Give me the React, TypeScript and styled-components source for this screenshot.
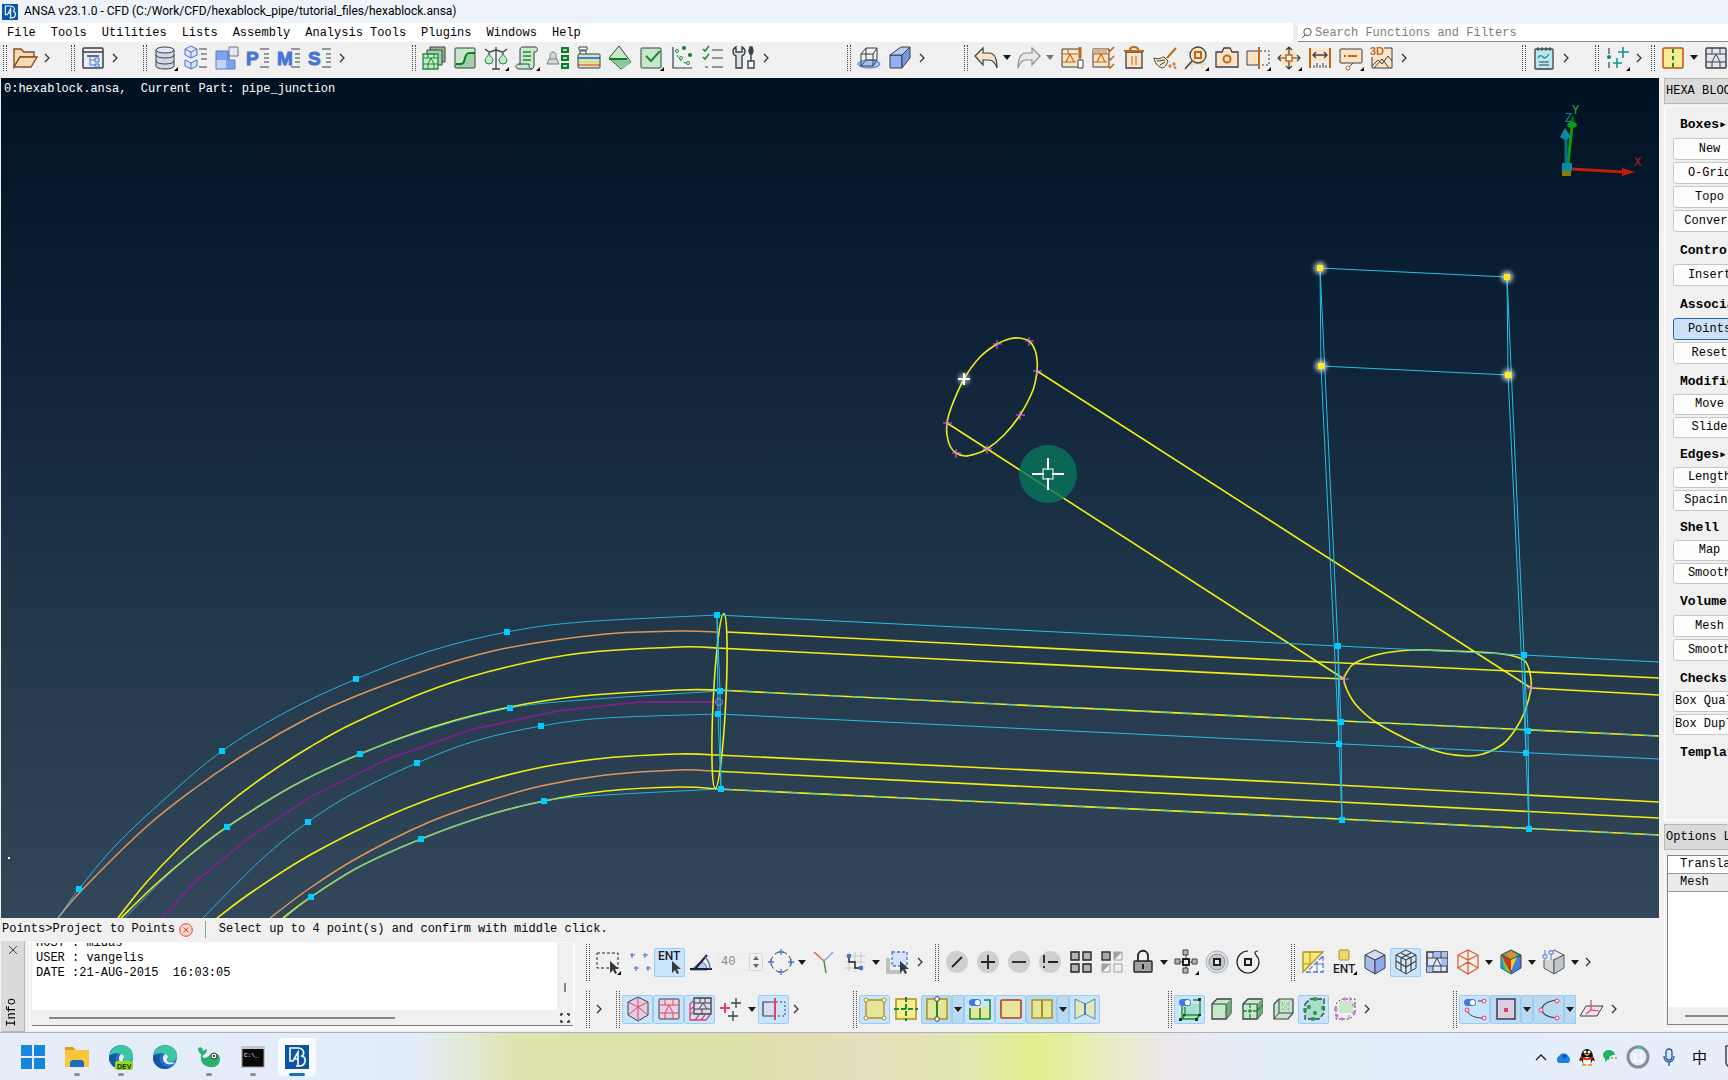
import type { ReactNode } from "react";
import styled, { createGlobalStyle } from "styled-components";

const GlobalStyle = createGlobalStyle`
    * {
        box-sizing: border-box;
    }
    body {
        margin: 0;
        overflow: hidden;
        background: #f0f0f0;
        color: #000;
        font-family: "Liberation Mono", "Noto Sans CJK SC", monospace;
        font-size: 12px;
        line-height: 15px;
    }
    button, input {
        font: inherit;
        color: inherit;
    }
    button {
        padding: 0;
        border: 0;
        background: none;
    }
`

/* ---------- icons ---------- */

const ink = "#3b4046"
const green = "#1c8a34"
const mint = "#c8e8cb"
const orange = "#c0681a"
const cream = "#fbe3c4"
const blue = "#4a74d8"
const pink = "#e0406c"
const gold = "#a8921a"
const lemon = "#e6e69a"

const lineRows = <path d="M15 3h8M17 8h6M17 13h6M15 21h8" stroke={ink} />
const letterIcon = (letter: string) => (
    <>
        <text x="0" y="19" fontFamily="Liberation Sans" fontWeight="700" fontSize="19" fill={blue} stroke={blue}>{letter}</text>
        <path d="M14 3h9M18 8h5M18 12h5M18 16h5M14 21h9" stroke={ink} />
    </>
)
const meshLines = (color: string) => (
    <path d="M2 8h20M2 16h20M8 2v6M16 2v6M8 16l4-8 4 8M8 16v6M16 16v6" stroke={color} />
)
const cubeFaces = (top: string, left: string, right: string, stroke: string) => (
    <>
        <path d="M12 0l10 5-10 5L2 5z" fill={top} stroke={stroke} />
        <path d="M2 5l10 5v14L2 18z" fill={left} stroke={stroke} />
        <path d="M22 5l-10 5v14l10-6z" fill={right} stroke={stroke} />
    </>
)
const greenBox = (
    <>
        <path d="M3 7l5-5h14v14l-5 6H3z" fill={mint} stroke={ink} strokeWidth="1.3" />
        <path d="M17 7l5-5v14l-5 6z" fill="#6fae78" />
        <path d="M3 7h14v15" stroke={ink} />
    </>
)
const disc = <circle cx="12" cy="12" r="11" fill="#cfcfcf" />
const toggle = (
    <>
        <rect x="1" y="2" width="12" height="7" rx="3.5" fill="#3f78e8" />
        <circle cx="9.500" cy="5.500" r="2.600" fill="#fff" />
    </>
)
const cursor = <path d="M14 11v12l3-3 2 4 2-1-2-4h4z" fill="#333b42" />

const icons: Record<string, ReactNode> = {
    open: (
        <g fill="#fbd8b0" stroke="#7b5128" strokeWidth="1.400">
            <path d="M1 21V3h7l3 3h10v5H7z" />
            <path d="M1 21l6-10h17l-6 10z" />
        </g>
    ),
    tree: (
        <>
            <rect x="2" y="2" width="20" height="20" rx="1" fill="#e9edf5" stroke={ink} strokeWidth="1.500" />
            <path d="M2 6h20M6 10h12" stroke={ink} strokeWidth="1.300" />
            <path d="M9 10v9h5M9 14h5" stroke={blue} />
            <path d="M14 12h4v4h-4zM14 18h4v3h-4z" fill="#cfdcf8" stroke={blue} />
        </>
    ),
    database: (
        <g fill="#cfd8ea" stroke={ink}>
            <path d="M3 4v16c0 4 18 4 18 0V4" />
            <ellipse cx="12" cy="4" rx="9" ry="3" fill="#e3e9f4" />
            <path d="M3 9c0 4 18 4 18 0M3 15c0 4 18 4 18 0" fill="none" />
        </g>
    ),
    parts: (
        <>
            <g fill="#d9e4fb" stroke={blue}>
                <path d="M7 0l6 3v6l-6 3-6-3V3zM1 3l6 3 6-3M7 6v6" />
                <path d="M1 14l6 3 6-3v6l-6 3-6-3zM7 17v6" />
            </g>
            {lineRows}
        </>
    ),
    blocks: (
        <>
            <path d="M1 5h10v9H1z" fill="#7ea4f0" />
            <path d="M1 14h10v9H1z" fill="#c3d4f8" />
            <path d="M11 5h4v9h5v9h-9z" fill="#7ea4f0" />
            <path d="M1 5h12v9h7v9H1z" stroke="#5a7cc0" />
            <path d="M14 1h9v9h-9z" fill="#e3e8f2" stroke="#6c7484" />
        </>
    ),
    p: letterIcon("P"),
    m: letterIcon("M"),
    s: letterIcon("S"),
    meshes: (
        <>
            <path d="M8 1h15v15H8z" fill="#8fb596" stroke={ink} />
            <path d="M5 4h15v15H5z" fill="#a9cfae" stroke={ink} />
            <path d="M1 8h15v15H1z" fill={mint} stroke={green} strokeWidth="1.300" />
            <path d="M1 12h15M1 18h15M6 18l3-6 3 6M6 8v4M12 8v4M6 18v5M12 18v5" stroke={green} />
        </>
    ),
    curve: (
        <>
            <rect x="2" y="2" width="20" height="20" rx="1" fill={mint} />
            <path d="M2 18h7l5-11h8v15H2z" fill="#a4cfa8" />
            <path d="M3 18h4c4 0 4-2 5-6s2-5 5-5h5" stroke="#0e7d26" strokeWidth="2" />
            <rect x="2" y="2" width="20" height="20" rx="1" stroke={ink} />
        </>
    ),
    balance: (
        <>
            <path d="M12 1v22M8 23h8M1 3l4 3c3 0 5-2 7-2s4 2 7 2l4-3" stroke={ink} strokeWidth="1.300" />
            <path d="M5 7c-1 4-4 5-4 7a4 4 0 0 0 8 0c0-2-3-3-4-7zM19 7c-1 4-4 5-4 7a4 4 0 0 0 8 0c0-2-3-3-4-7z" fill={mint} stroke={green} />
        </>
    ),
    scroll: (
        <>
            <path d="M5 19V4c0-2 1-3 3-3h12c3 0 3 4 1 5h-2v13c0 3-1 4-3 4H4c-4 0-4-5 0-5h10c0 4 1 5 3 5" fill={mint} stroke={ink} />
            <path d="M8 6h8M8 10h8M8 14h8" stroke={green} strokeWidth="1.300" />
        </>
    ),
    assign: (
        <>
            <path d="M1 18l2-5h8l2 5zM4 13V9c0-4 6-4 6 0v4" fill="#d2d8d4" stroke="#7c8580" />
            <path d="M16 2h6v4h-6zM16 10h6v4h-6zM16 18h6v4h-6z" fill="#a9d9b0" stroke="#0f7d28" strokeWidth="2" />
        </>
    ),
    layers: (
        <>
            <path d="M3 5h6v4H3zM2 1h8v3H2z" fill="#fff" stroke={ink} />
            <rect x="1" y="8" width="22" height="14" rx="1" fill={mint} />
            <path d="M1 12h22" stroke="#3f7fd0" strokeWidth="2" />
            <path d="M1 16h22" stroke="#f6d860" strokeWidth="2" />
            <path d="M1 19h22" stroke="#e58a5a" strokeWidth="2" />
            <rect x="1" y="8" width="22" height="14" rx="1" stroke={ink} />
        </>
    ),
    diamond: (
        <>
            <path d="M11 0L1 12l12 11 10-7z" fill={mint} stroke={ink} />
            <path d="M1 12h18l4 4-8 7z" fill="#8cc79a" />
            <path d="M1 13h18" stroke="#0e7d26" strokeWidth="2" />
        </>
    ),
    check: (
        <>
            <rect x="2" y="2" width="20" height="20" rx="1" fill={mint} stroke={ink} />
            <path d="M7 10l5 5 9-10" stroke={green} strokeWidth="2" />
        </>
    ),
    plot: (
        <>
            <path d="M3 1v21h19" stroke={ink} strokeWidth="1.200" />
            <path d="M6 4c1 8 4 12 13 14" stroke={green} strokeDasharray="3 2" />
            <g fill="#fff" stroke={green}>
                <circle cx="7" cy="5" r="1.500" /><circle cx="11" cy="12" r="1.500" /><circle cx="18" cy="17" r="1.500" />
            </g>
            <g fill="#0e7d26"><circle cx="14" cy="2" r="2" /><circle cx="20" cy="9" r="2" /></g>
        </>
    ),
    checklist: (
        <>
            <path d="M11 4h11M11 12h11M4 21h3M11 21h11" stroke={ink} strokeWidth="1.200" />
            <path d="M2 3l2 2 4-5M2 11l2 2 4-5" stroke={green} strokeWidth="1.600" />
        </>
    ),
    tools: (
        <g stroke={ink} strokeWidth="1.400">
            <path d="M4 1c-4 2-4 7 0 9v12h6V10c4-2 4-7 0-9v5H4z" fill="#dfe3e8" />
            <path d="M19 8v7M18 1h2l1 4-1 3h-2l-1-3z" fill={ink} />
            <path d="M16 15h6v7h-6z" fill="#fff" />
        </g>
    ),
    shadowBox: (
        <>
            <ellipse cx="12" cy="18" rx="11" ry="4" fill="#a9c2f2" stroke={blue} />
            <path d="M4 8h12v12H4zM4 8l5-6h11l-4 6M20 2v12l-4 6M9 2v12h11M9 14l-5 6" stroke={ink} />
        </>
    ),
    solidBox: (
        <>
            <path d="M2 9h12v13H2z" fill="#8fb0f2" stroke={ink} />
            <path d="M2 9l11-8h9l-8 8z" fill="#b6ccf8" stroke={ink} />
            <path d="M14 9l8-8v11l-8 10z" fill="#7797dc" stroke={ink} />
        </>
    ),
    undo: <path d="M1 10l8-8v5h6c5 0 8 5 8 15-2-6-5-8-8-8H9v5z" fill={cream} stroke={ink} strokeWidth="1.200" />,
    redo: <path d="M23 10l-8-8v5H9c-5 0-8 5-8 15 2-6 5-8 8-8h6v5z" fill="#e8e8e8" stroke="#8b8f94" strokeWidth="1.200" />,
    meshEdit: (
        <>
            <path d="M2 3h18v18H2z" fill={cream} stroke={ink} />
            <path d="M2 8h16M2 16h14M8 3v5M6 16l4-8 4 8" stroke={orange} strokeWidth="1.200" />
            <path d="M20 1v11" stroke={orange} strokeWidth="3" />
            <path d="M18 14h5v8h-5z" fill="#fff" stroke={ink} />
        </>
    ),
    meshCheck: (
        <>
            <path d="M2 3h16v18H2z" fill={cream} stroke={ink} />
            <path d="M2 3h14v5H2z" fill="#d9b48a" />
            <path d="M2 8h16M2 16h14M6 16l4-8 4 8" stroke={orange} strokeWidth="1.200" />
            <path d="M17 3l2 2 4-4M17 12l2 2 4-4M17 20l2 2 4-4" stroke={orange} strokeWidth="1.600" />
        </>
    ),
    trash: (
        <>
            <path d="M4 6h16v16H4z" fill={cream} stroke={ink} strokeWidth="1.300" />
            <path d="M2 5h20M8 4c0-4 8-4 8 0" stroke={orange} strokeWidth="2" />
            <path d="M10 10v9M14 10v9" stroke={orange} />
        </>
    ),
    broom: (
        <>
            <path d="M23 2l-9 10" stroke={orange} strokeWidth="2" />
            <path d="M1 12c5 2 8-1 10-1l4 4c-1 4-4 7-6 7-5-2-7-5-8-10z" fill={cream} stroke={ink} />
            <path d="M4 15c4 0 6-1 8-1M7 19l5-3" stroke={ink} />
            <path d="M16 19h2v2h-2zM20 17h2v2h-2zM21 21h2v1h-2z" stroke={orange} />
        </>
    ),
    zoom: (
        <>
            <path d="M1 6h22M1 18h22M8 1v22M18 1v22" stroke="#f3cf9c" />
            <circle cx="14" cy="9" r="8" fill={cream} stroke={ink} strokeWidth="1.300" />
            <path d="M11 6h6v6h-6z" stroke={orange} strokeWidth="2" />
            <path d="M8 15l-7 8" stroke={ink} strokeWidth="1.500" />
        </>
    ),
    camera: (
        <>
            <path d="M1 6h6l2-4h6l2 4h6v15H1z" fill={cream} stroke={ink} strokeWidth="1.300" />
            <circle cx="12" cy="13" r="3.500" stroke={orange} strokeWidth="2" />
        </>
    ),
    section: (
        <>
            <path d="M1 5h12v14H1z" fill={cream} stroke={ink} />
            <path d="M14 5h9v14h-9" stroke={ink} strokeDasharray="2 2" />
            <path d="M13 1v22" stroke={orange} strokeWidth="2" />
        </>
    ),
    move: (
        <>
            <circle cx="12" cy="12" r="9" fill={cream} />
            <path d="M12 1v8M12 15v8M1 12h8M15 12h8M9 4l3-3 3 3M9 20l3 3 3-3M4 9l-3 3 3 3M20 9l3 3-3 3" stroke={ink} strokeWidth="1.200" />
            <path d="M9 9h6v6H9z" fill="#fff" stroke={orange} strokeWidth="1.500" />
        </>
    ),
    measure: (
        <>
            <path d="M2 3h20v12H2z" fill={cream} />
            <path d="M2 2v20M22 2v20" stroke={orange} strokeWidth="2" />
            <path d="M5 9h14M8 6L5 9l3 3M16 6l3 3-3 3" stroke={ink} strokeWidth="1.300" />
            <path d="M6 22v-3M9 22v-5M12 22v-3M15 22v-5M18 22v-3" stroke={ink} />
        </>
    ),
    note: (
        <>
            <rect x="1" y="3" width="22" height="14" rx="1" fill={cream} stroke={ink} />
            <path d="M5 10h2M9 10h9" stroke={orange} strokeWidth="2" />
            <path d="M14 17l-4 4" stroke={ink} />
            <circle cx="9" cy="22" r="2" fill="#fff" stroke={orange} />
        </>
    ),
    threeD: (
        <>
            <path d="M14 2h8v20H2V11" fill={cream} stroke={ink} />
            <path d="M2 20l6-6 4 4 6-8 4 5M4 22l8-9 7 9" stroke={ink} />
            <text x="0" y="9" fontFamily="Liberation Sans" fontWeight="700" fontSize="11" fill={orange}>3D</text>
        </>
    ),
    notebook: (
        <>
            <rect x="3" y="3" width="18" height="20" rx="1" fill="#b9e8f0" stroke={ink} strokeWidth="1.300" />
            <path d="M6 1v4M10 1v4M14 1v4M18 1v4" stroke={ink} />
            <path d="M6 12c2-4 4-2 5-1s3 2 6-3" stroke="#1688a0" strokeWidth="1.300" />
            <path d="M7 16h10M7 19h10" stroke={ink} />
        </>
    ),
    addPoints: (
        <>
            <path d="M4 2v6M4 16v6" stroke="#7c868c" strokeWidth="2" />
            <circle cx="4" cy="11" r="2" fill="#14808e" />
            <path d="M18 1v11M13 6h11M12 12v10M8 17h9" stroke="#14909e" strokeWidth="1.600" />
        </>
    ),
    stitch: (
        <>
            <rect x="2" y="2" width="20" height="20" rx="1" fill="#f8eb94" stroke="#c4501c" strokeWidth="1.500" />
            <path d="M12 3v18" stroke={green} strokeWidth="2" strokeDasharray="4 3" />
        </>
    ),
    mesh: (
        <>
            <rect x="2" y="2" width="20" height="20" rx="1" fill="#e4e6ee" stroke={ink} strokeWidth="1.400" />
            {meshLines(ink)}
        </>
    ),
    boxSelect: (
        <>
            <path d="M1 3h21v15H1z" stroke="#222" strokeDasharray="3 2" />
            {cursor}
        </>
    ),
    fourPoints: <path d="M5 3v5M3 5h5M18 3v5M16 5h5M9 16v5M7 18h5M21 16v5M19 18h5" stroke={blue} strokeWidth="1.200" />,
    entity: (
        <>
            <text x="0" y="10" fontFamily="Roboto" fontWeight="500" fontSize="12" fill="#1c2127">ENT</text>
            {cursor}
        </>
    ),
    angle: (
        <>
            <path d="M10 13c5-2 8 2 8 7H2z" fill="#b9cef5" stroke={blue} />
            <path d="M1 19h22M6 19L18 5" stroke="#1e2328" strokeWidth="2" />
            <path d="M16 7c4 4 5 8 5 12" stroke={blue} strokeWidth="1.400" />
        </>
    ),
    circleSelect: (
        <>
            <circle cx="12" cy="12" r="10" stroke={ink} strokeDasharray="5 3" />
            <path d="M12-1v6M9 2h6M12 19v6M9 22h6M-1 12h6M2 9v6M19 12h6M22 9v6" stroke={blue} strokeWidth="1.300" />
        </>
    ),
    branch: (
        <>
            <path d="M12 11L2 2" stroke="#e0623c" strokeWidth="1.500" />
            <path d="M12 11l9-9" stroke="#7fa4ec" strokeWidth="1.500" />
            <path d="M12 11l2 12" stroke="#2a9a46" strokeWidth="1.500" />
        </>
    ),
    gridPath: (
        <>
            <path d="M2 6h20M2 12h20M2 18h20M6 2v20M12 2v20M18 2v20" stroke="#c4c8cc" />
            <path d="M6 6v6h6v6h6" stroke="#1e2328" strokeWidth="1.400" />
            <path d="M4 4h4v4H4zM16 16h4v4h-4z" fill={blue} />
        </>
    ),
    regionSelect: (
        <>
            <path d="M2 8v14h14" stroke="#c0c0c0" strokeWidth="4" />
            <path d="M6 2h15v14H6z" fill="#d4e2fb" stroke={blue} strokeWidth="1.300" strokeDasharray="3 2" />
            {cursor}
        </>
    ),
    slash: <>{disc}<path d="M7 17L17 7" stroke="#222" strokeWidth="1.800" /></>,
    plus: <>{disc}<path d="M5 12h14M12 5v14" stroke="#222" strokeWidth="1.800" /></>,
    minus: <>{disc}<path d="M5 12h14" stroke="#222" strokeWidth="1.800" /></>,
    invert: <>{disc}<path d="M6 5v8M6 16v2M10 12h10" stroke="#222" strokeWidth="1.800" /></>,
    tiles: <path d="M2 2h8v8H2zM14 2h8v8h-8zM2 14h8v8H2zM14 14h8v8h-8z" fill="#b4b4b4" stroke="#222" strokeWidth="1.400" />,
    tilesHalf: (
        <>
            <path d="M14 10V2h8zM2 22v-8h8z" fill="#a0a0a0" />
            <path d="M14 2h8v8h-8zM2 14h8v8H2zM14 14h8v8h-8z" stroke="#a0a0a0" />
            <path d="M2 2h8v8H2z" fill="#a8a8a8" stroke="#333" strokeWidth="1.400" />
        </>
    ),
    lock: (
        <>
            <path d="M7 11V6c0-7 10-7 10 0v5" stroke="#222" strokeWidth="1.800" />
            <rect x="3" y="11" width="18" height="11" rx="1" fill="#a2a2a2" stroke="#222" strokeWidth="1.400" />
            <path d="M12 14v5" stroke="#222" strokeWidth="2" />
        </>
    ),
    spread: (
        <>
            <path d="M9 0h5v5H9zM9 18h5v5H9zM1 9h5v5H1zM18 9h5v5h-5z" fill="#b4b4b4" stroke={ink} />
            <path d="M6 12h12M12 5v13" stroke={ink} />
            <path d="M9 9h6v6H9z" fill="#eee" stroke="#222" strokeWidth="2" />
        </>
    ),
    ring: (
        <>
            <circle cx="12" cy="12" r="11" fill="#dde2e8" stroke="#a8b0b8" />
            <circle cx="12" cy="12" r="8" fill="#c3c9cf" stroke="#8b939a" />
            <path d="M9 9h6v6H9z" fill="#eee" stroke="#222" strokeWidth="2" />
        </>
    ),
    orbit: (
        <>
            <path d="M22 1c-3 0-4 2-2 4s3 4 3 7A11 11 0 1 1 12 1" stroke="#222" strokeWidth="1.200" />
            <path d="M9 9h6v6H9z" fill="#eee" stroke="#222" strokeWidth="2" />
        </>
    ),
    plan: (
        <>
            <path d="M22 6v16H6z" fill="#fff" stroke={blue} strokeWidth="1.300" strokeDasharray="5 2" />
            <path d="M15 14h7M16 12v10" stroke={blue} />
            <path d="M2 2h20L2 22z" fill="#f8e878" stroke={gold} strokeWidth="1.300" />
            <path d="M9 2v12M2 14h8" stroke={gold} />
        </>
    ),
    entityBox: (
        <>
            <rect x="7" y="0" width="10" height="10" rx="1" fill="#ecd96a" stroke={gold} />
            <text x="1" y="23" fontFamily="Roboto" fontWeight="500" fontSize="12" fill="#1c2127">ENT</text>
        </>
    ),
    cube: cubeFaces("#d5dcf2", "#a9bdea", "#8fa9e6", ink),
    cubeGrid: (
        <>
            {cubeFaces("#d3e9fa", "#d3e9fa", "#d3e9fa", ink)}
            <path d="M7 3l10 5v13M17 3L7 8v13M2 11l10 6 10-6" stroke={ink} strokeWidth="1.200" />
        </>
    ),
    meshBlue: (
        <>
            <rect x="2" y="2" width="20" height="20" fill="#dfe8fa" stroke={ink} strokeWidth="1.600" />
            <path d="M9 2h13v6H9zM2 16h6v6H2zM16 9h6v7h-6z" fill="#a4bff4" />
            {meshLines(ink)}
        </>
    ),
    cubeRed: (
        <g stroke="#e0582c" strokeWidth="1.200">
            <path d="M12 0l10 5v13l-10 6-10-6V5zM2 5l10 5 10-5M12 10v14M2 18l10-6 10 6M12 0v12" />
        </g>
    ),
    cubeRainbow: (
        <>
            {cubeFaces("#3fae6c", "#f0b428", "#3f7fe0", ink)}
            <path d="M2 5l10 5v14z" fill="#d9301c" />
            <path d="M2 5v13l10 6z" fill="#1c9ad0" />
            <path d="M2 5l4 14 6 5z" fill="#7ecb2c" />
            <path d="M12 10l6-3-6 14z" fill="#f0d428" />
            <path d="M6 4l6-3 5 4-5 4z" fill="#f08a28" />
        </>
    ),
    cubeFilter: (
        <>
            {cubeFaces("#e6e6e6", "#d0d4d6", "#c2c6c8", "#555b60")}
            <path d="M0 0h11v10H0z" fill="#f0f0f0" />
            <path d="M3 0v10M9 0v10" stroke={blue} />
            <path d="M1 5h4v3H1zM7 1h4v3H7z" fill="#fff" stroke={blue} />
        </>
    ),
    hexPink: (
        <>
            <path d="M12 0l10 5v13l-10 6-10-6V5z" fill="#e0cfe0" stroke={ink} />
            <path d="M2 5l10 5 10-5M12 10v14M2 18l10-8M22 18l-10-8M12 0v10" stroke={pink} />
        </>
    ),
    meshPink: (
        <>
            <rect x="2" y="2" width="20" height="20" rx="1" fill="#e4d4e4" stroke={ink} />
            {meshLines(pink)}
        </>
    ),
    boxPink: (
        <>
            <path d="M6 1h17v16H6z" fill="#dcd9e8" stroke={ink} strokeWidth="1.300" />
            <path d="M6 6h17M6 12h17M12 1v5M17 1v5M11 12l4-6 4 6M14 12v5" stroke={ink} />
            <path d="M6 3L2 7v16h16l4-5M2 13l4-4M2 18l4-4M7 23l4-5M13 23l4-5" stroke={pink} strokeWidth="1.300" />
        </>
    ),
    plusPink: (
        <>
            <path d="M6 6v10M1 11h10" stroke={pink} strokeWidth="2" />
            <path d="M17 1v10M12 6h10M14 14v10M9 19h10" stroke={ink} strokeWidth="1.300" />
        </>
    ),
    sectionPink: (
        <>
            <path d="M1 5h12v14H1z" fill="#d9dcf0" stroke={ink} strokeWidth="1.200" />
            <path d="M14 5h9v14h-9" stroke={ink} strokeDasharray="2 2" />
            <path d="M13 1v22" stroke={pink} strokeWidth="2" />
        </>
    ),
    quadNodes: (
        <>
            <path d="M3 3h18v18H3z" fill={lemon} stroke={gold} strokeWidth="1.300" />
            <g fill="#fff" stroke={gold}>
                <circle cx="3" cy="3" r="2" /><circle cx="21" cy="3" r="2" /><circle cx="3" cy="21" r="2" /><circle cx="21" cy="21" r="2" />
            </g>
        </>
    ),
    quadCross: (
        <>
            <rect x="2" y="2" width="20" height="20" fill="#f6ee8e" stroke={gold} strokeWidth="1.500" />
            <path d="M12 0v24M0 12h24" stroke={green} strokeWidth="2" strokeDasharray="5 2" />
        </>
    ),
    quadSplit: (
        <>
            <rect x="2" y="2" width="20" height="20" fill={lemon} stroke={gold} strokeWidth="1.500" />
            <path d="M12 4v17" stroke={green} strokeWidth="2" />
            <g fill="#fff" stroke={ink}><circle cx="12" cy="2" r="2.300" /><circle cx="12" cy="22" r="2.300" /></g>
        </>
    ),
    quadToggle: (
        <>
            <path d="M2 10h20v12H2z" fill={lemon} />
            <path d="M2 11v11h20V3h-6M12 11v11" stroke={green} strokeWidth="1.600" />
            {toggle}
        </>
    ),
    quadRed: <rect x="2" y="3" width="20" height="18" rx="1" fill={lemon} stroke="#b83a1c" strokeWidth="1.600" />,
    quadPair: (
        <>
            <rect x="2" y="3" width="20" height="18" fill={lemon} stroke={gold} strokeWidth="1.500" />
            <path d="M12 3v18" stroke={gold} strokeWidth="2" />
        </>
    ),
    book: (
        <>
            <path d="M2 2l10 5 10-5v20l-10-5-10 5z" fill="#e2e8b8" stroke="#5a88b8" />
            <path d="M12 6v12" stroke={blue} strokeWidth="2" />
        </>
    ),
    greenToggle: (
        <>
            <path d="M4 10l3-3h15v14l-3 2H3z" fill="#a9dfd0" />
            <path d="M4 9v13h14l4-4V3h-7M4 22l3-4h15M7 10v8" stroke={green} strokeWidth="1.300" />
            <path d="M1 21h3v3H1zM17 21h3v3h-3zM20 1h3v3h-3zM5 17h2v2H5zM20 17h3v2h-3z" fill="#1d3a28" />
            {toggle}
        </>
    ),
    greenBox,
    greenCross: <>{greenBox}<path d="M10 7v15M3 14h14l5-6" stroke={green} strokeWidth="1.300" strokeDasharray="4 1" /></>,
    greenInner: (
        <>
            <path d="M3 7l5-5h14v14l-5 6H3z" fill={mint} stroke={ink} strokeWidth="1.200" />
            <path d="M8 2v14h14M8 16l-5 6" stroke={ink} />
            <path d="M11 6h7v7h-7zM8 3l10 10M21 3L11 13" stroke="#7ba883" strokeDasharray="1 1" />
        </>
    ),
    greenNodes: (
        <>
            <path d="M3 7l5-5h14v14l-5 6H3z" fill="#a9dfd0" stroke={ink} strokeWidth="1.300" strokeDasharray="5 2" />
            <path d="M12 1h2v2h-2zM2 12h2v2H2zM20 10h2v2h-2zM10 21h2v2h-2zM12 15h2v2h-2zM6 9h2v2H6z" fill="#fff" stroke={green} strokeWidth="1.300" />
        </>
    ),
    greenPlus: (
        <>
            <rect x="6" y="4" width="14" height="12" rx="1" fill={mint} />
            <path d="M3 7l5-5h14v14l-5 6H3z" stroke={ink} strokeDasharray="2 2" />
            <path d="M12 0v4M17 0v4M21 6v4M21 14v4M2 10v4M4 17v4M9 20v4M16 18v4M1 12h4M10 2h5M19 8h4M19 16h4M2 19h4M7 22h4" stroke="#d45ad8" />
        </>
    ),
    arcToggle: (
        <>
            <path d="M4 12c0 5 6 9 16 9M15 4h5" stroke={ink} />
            <g fill="#fbe4ec" stroke={pink}>
                <circle cx="4" cy="13" r="2" /><circle cx="21" cy="21" r="2" /><circle cx="21" cy="4" r="2" />
            </g>
            {toggle}
        </>
    ),
    face: (
        <>
            <rect x="3" y="2" width="18" height="20" fill="#d9cfe4" stroke={ink} strokeWidth="1.500" />
            <path d="M10 11h4v4h-4z" fill={pink} />
        </>
    ),
    arc: (
        <>
            <path d="M20 3C0 5 0 20 20 21" stroke={ink} strokeWidth="1.200" />
            <g fill="#fbe4ec" stroke={pink}>
                <circle cx="4" cy="13" r="2" /><circle cx="20" cy="21" r="2" /><circle cx="20" cy="4" r="2" />
            </g>
        </>
    ),
    plane: (
        <>
            <path d="M6 9h17l-6 10H0z" fill="#f6e4e8" stroke={ink} />
            <path d="M11 3v10l8 1M11 13l-5 4" stroke={pink} strokeWidth="1.200" />
        </>
    ),
}

const IconSvg = styled.svg`
    display: block;
    flex: none;
    overflow: visible;
`

interface IconProps {
    name: string
    corner?: boolean
}

const Icon = function ({ name, corner }: IconProps) {
    return (
        <IconSvg width="28" height="28" viewBox="-2 -2 28 28" fill="none" aria-hidden="true">
            {icons[name]}
            {corner && <path d="M25 21v4h-4z" fill="#000" />}
        </IconSvg>
    )
}

/* ---------- tool bars ---------- */

interface Tool {
    icon: string
    corner?: boolean
    active?: boolean
    pressed?: boolean
    caret?: boolean
    spin?: boolean
    faded?: boolean
}

const toneOf = (p: { $active?: boolean, $pressed?: boolean }) =>
    p.$pressed ? "#bcd9f2" : p.$active ? "#c9e4fb" : "transparent"
const edgeOf = (p: { $active?: boolean, $pressed?: boolean }) =>
    p.$pressed || p.$active ? "#99cdf5" : "transparent"

const Group = styled.div<{ $width?: number }>`
    display: flex;
    flex: none;
    align-items: center;
    width: ${(p) => (p.$width ? `${p.$width}px` : "auto")};
`
const Grip = styled.span<{ $tall?: boolean }>`
    width: 4px;
    height: ${(p) => (p.$tall ? 37 : 26)}px;
    flex: none;
    margin: 0 2px 0 3px;
    border: 0 dotted #444;
    border-width: 0 1px;
`
const ToolButton = styled.button<{ $active?: boolean, $pressed?: boolean }>`
    display: flex;
    align-items: center;
    justify-content: center;
    flex: none;
    width: 31px;
    height: 29px;
    border: 1px solid ${edgeOf};
    border-radius: 2px;
    background: ${toneOf};
`
const CaretButton = styled.button<{ $pressed?: boolean, $faded?: boolean }>`
    display: flex;
    align-items: center;
    justify-content: center;
    flex: none;
    width: 12px;
    height: 29px;
    border: 1px solid ${edgeOf};
    background: ${toneOf};
    color: ${(p) => (p.$faded ? "#777" : "#1c1c1c")};
`
const MoreButton = styled.button`
    display: flex;
    align-items: center;
    justify-content: center;
    flex: none;
    width: 13px;
    height: 29px;
`
const SpinBox = styled.label`
    display: flex;
    flex: none;
    width: 45px;
    height: 18px;
    margin: 0 2px;
    color: #8a8a8a;
`
const SpinInput = styled.input`
    width: 31px;
    padding: 0 0 0 2px;
    border: 1px solid #ebebeb;
    background: #f0f0f0;
    color: #8a8a8a;
`
const SpinArrows = styled.span`
    display: flex;
    flex: 1;
    align-items: center;
    justify-content: center;
    border: 1px solid #d5d5d5;
    border-radius: 2px;
`

interface ToolGroupProps {
    width?: number
    tools: Tool[]
    more?: boolean
    tall?: boolean
}

const ToolGroup = function ({ width, tools, more, tall }: ToolGroupProps) {
    return (
        <Group $width={width}>
            <Grip $tall={tall} />
            {tools.map((tool) => (
                <Group key={tool.icon}>
                    <ToolButton aria-label={tool.icon} $active={tool.active} $pressed={tool.pressed}>
                        <Icon name={tool.icon} corner={tool.corner} />
                    </ToolButton>
                    {tool.caret && (
                        <CaretButton aria-label={`${tool.icon} options`} $pressed={tool.pressed} $faded={tool.faded}>
                            <IconSvg width="8" height="5" viewBox="0 0 8 5"><path d="M0 0h8L4 5z" fill="currentColor" /></IconSvg>
                        </CaretButton>
                    )}
                    {tool.spin && (
                        <SpinBox aria-label="Feature angle">
                            <SpinInput type="text" defaultValue="40" disabled />
                            <SpinArrows>
                                <IconSvg width="6" height="12" viewBox="0 0 6 12"><path d="M0 4l3-4 3 4zM0 8l3 4 3-4z" fill="#666" /></IconSvg>
                            </SpinArrows>
                        </SpinBox>
                    )}
                </Group>
            ))}
            {more && (
                <MoreButton aria-label="More tools">
                    <IconSvg width="6" height="10" viewBox="0 0 6 10" fill="none"><path d="M1 1l4 4-4 4" stroke="#333" strokeWidth="1.300" /></IconSvg>
                </MoreButton>
            )}
        </Group>
    )
}

const topGroups: ToolGroupProps[] = [
    { width: 68, more: true, tools: [{ icon: "open" }] },
    { width: 72, more: true, tools: [{ icon: "tree" }] },
    {
        width: 269, more: true,
        tools: [{ icon: "database", corner: true }, { icon: "parts" }, { icon: "blocks" }, { icon: "p" }, { icon: "m" }, { icon: "s" }],
    },
    {
        width: 435, more: true,
        tools: [
            { icon: "meshes" }, { icon: "curve" }, { icon: "balance", corner: true }, { icon: "scroll", corner: true },
            { icon: "assign" }, { icon: "layers" }, { icon: "diamond" }, { icon: "check", corner: true },
            { icon: "plot" }, { icon: "checklist" }, { icon: "tools" },
        ],
    },
    { width: 117, more: true, tools: [{ icon: "shadowBox" }, { icon: "solidBox" }] },
    {
        width: 558, more: true,
        tools: [
            { icon: "undo", caret: true }, { icon: "redo", caret: true, faded: true }, { icon: "meshEdit" }, { icon: "meshCheck" },
            { icon: "trash" }, { icon: "broom" }, { icon: "zoom", corner: true }, { icon: "camera" },
            { icon: "section", corner: true }, { icon: "move", corner: true }, { icon: "measure" },
            { icon: "note", corner: true }, { icon: "threeD" },
        ],
    },
    { width: 73, more: true, tools: [{ icon: "notebook" }] },
    { width: 56, more: true, tools: [{ icon: "addPoints", corner: true }] },
    { tools: [{ icon: "stitch", caret: true }, { icon: "mesh" }] },
]

const selectionGroups: ToolGroupProps[] = [
    {
        width: 349, more: true,
        tools: [
            { icon: "boxSelect", corner: true }, { icon: "fourPoints" }, { icon: "entity", active: true }, { icon: "angle", spin: true },
            { icon: "circleSelect", caret: true }, { icon: "branch" }, { icon: "gridPath", caret: true }, { icon: "regionSelect" },
        ],
    },
    {
        width: 356,
        tools: [
            { icon: "slash" }, { icon: "plus" }, { icon: "minus" }, { icon: "invert" }, { icon: "tiles" }, { icon: "tilesHalf" },
            { icon: "lock", caret: true }, { icon: "spread", corner: true }, { icon: "ring" }, { icon: "orbit" },
        ],
    },
    {
        more: true,
        tools: [
            { icon: "plan" }, { icon: "entityBox", corner: true }, { icon: "cube" }, { icon: "cubeGrid", active: true },
            { icon: "meshBlue" }, { icon: "cubeRed", caret: true }, { icon: "cubeRainbow", caret: true }, { icon: "cubeFilter", caret: true },
        ],
    },
]

const visibilityGroups: ToolGroupProps[] = [
    { width: 30, more: true, tools: [] },
    {
        width: 237, more: true,
        tools: [
            { icon: "hexPink", active: true }, { icon: "meshPink", active: true }, { icon: "boxPink", active: true },
            { icon: "plusPink", caret: true }, { icon: "sectionPink", active: true },
        ],
    },
    {
        width: 315,
        tools: [
            { icon: "quadNodes", active: true }, { icon: "quadCross" }, { icon: "quadSplit", pressed: true, caret: true },
            { icon: "quadToggle", active: true }, { icon: "quadRed", active: true }, { icon: "quadPair", pressed: true, caret: true },
            { icon: "book", active: true },
        ],
    },
    {
        width: 285, more: true,
        tools: [
            { icon: "greenToggle", active: true }, { icon: "greenBox" }, { icon: "greenCross" }, { icon: "greenInner" },
            { icon: "greenNodes", active: true }, { icon: "greenPlus" },
        ],
    },
    {
        more: true,
        tools: [
            { icon: "arcToggle", active: true }, { icon: "face", pressed: true, caret: true },
            { icon: "arc", pressed: true, caret: true }, { icon: "plane" },
        ],
    },
]

/* ---------- window frame ---------- */

const Window = styled.div`
    display: flex;
    flex-direction: column;
    height: 100vh;
    overflow: hidden;
`
const TitleBar = styled.header`
    display: flex;
    align-items: center;
    gap: 6px;
    height: 23px;
    padding-left: 2px;
    background: #eef3fa;
    font-family: Roboto, "Noto Sans", sans-serif;
    font-size: 12px;
`
const MenuRow = styled.div`
    display: flex;
    height: 19px;
    gap: 5px;
`
const Menu = styled.nav`
    display: flex;
    flex: 1;
    align-items: center;
    gap: 15px;
    padding-left: 7px;
    background: #fff;
`
const MenuItem = styled.button`
    line-height: 18px;
`
const SearchBox = styled.label`
    display: flex;
    align-items: center;
    gap: 3px;
    width: 430px;
    margin-top: 1px;
    padding: 1px 0 0 4px;
    background: #fff;
    border-bottom: 1px solid #8a8a8a;
`
const SearchInput = styled.input`
    flex: 1;
    min-width: 0;
    padding: 0;
    border: 0;
    background: none;
    outline: none;
    &::placeholder {
        color: #7d7d7d;
        opacity: 1;
    }
`
const ToolBar = styled.div`
    display: flex;
    align-items: center;
    height: 36px;
    padding-bottom: 5px;
    overflow: hidden;
`
const Body = styled.div`
    display: flex;
    flex: 1;
    min-height: 0;
    gap: 5px;
`
const Main = styled.main`
    display: flex;
    flex: 1;
    flex-direction: column;
    min-width: 0;
    padding-left: 1px;
`
const Viewport = styled.section`
    position: relative;
    flex: 1;
    min-height: 0;
    overflow: hidden;
    background: linear-gradient(#001122, #0e2338 32%, #203649 62%, #33475a);
`
const ViewportLabel = styled.div`
    position: absolute;
    top: 4px;
    left: 3px;
    color: #fff;
    white-space: pre;
`
const SceneSvg = styled.svg`
    display: block;
    width: 100%;
    height: 100%;
`

/* ---------- 3D scene ---------- */

type Point = [number, number]

const parse = (text: string): Point[] =>
    text.split(" ").map((pair) => pair.split(",").map(Number) as Point)

// Catmull-Rom spline written out as cubic beziers
const smooth = (text: string, closed = false) => {
    const pts = parse(text)
    const n = pts.length
    const at = (i: number) => (closed ? pts[(i + n) % n] : pts[Math.max(0, Math.min(n - 1, i))])
    let d = `M${pts[0]}`
    for (let i = 0; i < (closed ? n : n - 1); i++) {
        const [a, b, c, e] = [at(i - 1), at(i), at(i + 1), at(i + 2)]
        d += `C${b[0] + (c[0] - a[0]) / 6},${b[1] + (c[1] - a[1]) / 6} ${c[0] - (e[0] - b[0]) / 6},${c[1] - (e[1] - b[1]) / 6} ${c}`
    }
    return d
}

const edges = [
    "58,918 79,889 116,845 167,797 222,751 286,712 356,679 430,651 507,632 582,622 717,615",
    "125,918 170,873 227,827 291,787 360,754 436,727 510,708 582,700 720,691",
    "203,918 262,859 308,822 354,793 417,763 475,741 541,726 606,718 718,714",
    "285,918 311,897 359,867 421,839 485,816 544,801 606,795 721,789",
]
const pipes = [
    "118,918 145,884 179,848 223,808 262,778 310,747 356,722 436,688 507,667 582,653 679,647 717,648",
    "121,918 155,885 190,855 227,827 291,787 360,754 436,726 510,707 582,696 679,690 717,690",
    "217,918 252,892 310,855 388,816 456,790 533,769 606,758 679,754 717,755",
    "283,918 311,897 359,867 421,839 485,816 544,801 606,791 679,787 717,789",
]
const seams = [
    "58,918 82,890 145,828 194,789 250,751 310,717 356,696 436,667 507,648 606,634 679,631 717,632",
    "270,918 310,888 359,857 427,823 485,802 541,786 606,775 679,770 712,771",
]
const nodes = parse(
    "79,889 222,751 356,679 507,632 717,615 227,827 360,754 510,708 720,691 308,822 417,763 541,726 718,714 311,897 421,839 544,801 721,789 " +
    "1338,646 1524,655 1341,722 1528,731 1339,744 1526,753 1342,820 1529,829",
)
const picked = parse("1320,268 1507,277 1321,366 1508,375")
const hotPoints = parse("997,344 1029,341 1037,371 1020,415 987,449 956,453 947,423 1344,679 1531,688")

const Scene = function () {
    return (
        <SceneSvg viewBox="1 78 1658 840" preserveAspectRatio="xMinYMin slice" fill="none" aria-label="3D view">
            <defs>
                <filter id="glow" x="-100%" y="-100%" width="300%" height="300%"><feGaussianBlur stdDeviation="2" /></filter>
            </defs>
            <polyline
                points="162,918 194,883 250,837 310,797 388,759 470,730 557,711 640,702 717,702"
                stroke="#84208f" strokeWidth="2" opacity="0.850"
            />
            <g stroke="#e0955a" strokeWidth="1.500">
                {seams.map((s) => <path key={s} d={smooth(s)} />)}
            </g>
            <g stroke="#f2ee14" strokeWidth="1.600">
                {pipes.map((s) => <path key={s} d={smooth(s)} />)}
                <path d="M727,632L1280,660L1659,678M717,648L1280,676L1344,679M1531,688L1659,695M717,690L1280,718L1659,736M717,755L1280,782L1659,802M712,771L1280,799L1659,818M717,789L1280,816L1659,835" />
                <path d="M1037,371L1531,688M947,423L1344,679" />
                <ellipse cx="719.500" cy="701" rx="6.300" ry="87.500" transform="rotate(2.800 719.500 701)" />
                <path d={smooth("947,423 951,408 964,379 980,357 997,344 1009,339 1019,338 1029,341 1035,350 1037,360 1037,371 1033,390 1020,415 1004,435 987,449 975,454 965,456 956,453 950,446 947,435", true)} />
                <path d={smooth("1344,679 1347,672 1355,663 1380,654 1413,650 1453,651 1493,653 1513,656 1525,661 1530,673 1531,688 1525,711 1515,730 1503,744 1483,754 1467,756 1443,753 1417,744 1377,723 1357,706 1347,690", true)} />
            </g>
            <g stroke="#28bfe8">
                {edges.map((s) => <path key={s} d={smooth(s)} opacity="0.900" />)}
                <path d="M717,615L1338,646L1524,655L1659,662M718,714L1280,741L1659,759" />
                <path d="M720,690L1280,718L1659,736M721,789L1280,816L1659,835" strokeDasharray="12 10" opacity="0.800" />
                <path d="M717,615L718,714L721,789M717,615L720,691L721,789" />
                <path d="M1320,268L1507,277M1321,366L1508,375" />
                <path d="M1320,268L1338,646L1341,722L1342,820M1320,268L1321,366L1339,744L1342,820M1338,646L1339,744" />
                <path d="M1507,277L1524,655L1528,731L1529,829M1507,277L1508,375L1526,753L1529,829M1524,655L1526,753" />
            </g>
            <circle cx="719" cy="702" r="3.500" stroke="#7a8cf0" />
            {nodes.map(([x, y]) => <rect key={`${x}-${y}`} x={x - 3} y={y - 3} width="6" height="6" fill="#00ccff" />)}
            {picked.map(([x, y]) => (
                <g key={`${x}-${y}`}>
                    <circle cx={x} cy={y} r="6" fill="#fff" opacity="0.700" filter="url(#glow)" />
                    <rect x={x - 3} y={y - 3} width="6" height="6" fill="#ffee10" />
                </g>
            ))}
            {hotPoints.map(([x, y]) => <path key={`${x}-${y}`} d={`M${x - 4},${y}h9M${x},${y - 4}v9`} stroke="#e070e0" />)}
            <circle cx="964" cy="379" r="6" fill="#fff" opacity="0.450" filter="url(#glow)" />
            <path d="M958,379h12M964,373v12" stroke="#fff" strokeWidth="2" />
            <circle cx="1048" cy="474" r="29" fill="#07755a" opacity="0.800" />
            <path d="M1032,474h12M1052,474h12M1048,458v12M1048,478v12" stroke="#fff" strokeWidth="2" />
            <rect x="1043" y="469" width="10" height="10" stroke="#fff" />
            <path d="M8,857h2v2h-2z" fill="#fff" />

            <path d="M1572,169L1624,172" stroke="#c01c0c" strokeWidth="3" />
            <path d="M1622,168L1635,172L1622,176z" fill="#c01c0c" />
            <path d="M1568,163L1572,126" stroke="#08a010" strokeWidth="3" />
            <path d="M1568,125L1573,115L1576,125z" fill="#056a0c" />
            <ellipse cx="1572" cy="125" rx="5" ry="3" fill="#08a010" />
            <path d="M1566,163V136" stroke="#067284" strokeWidth="3" />
            <path d="M1560,137L1565,128L1571,137L1565,140z" fill="#0a8ca0" />
            <rect x="1562" y="163" width="10" height="8" fill="#0a8ca0" />
            <rect x="1562" y="171" width="9" height="5" fill="#8a7a08" />
            <g fontFamily="Liberation Mono" fontSize="12">
                <text x="1572" y="114" fill="#18c020">Y</text>
                <text x="1565" y="122" fill="#0a8ca0">Z</text>
                <text x="1634" y="166" fill="#b01c14">X</text>
            </g>
        </SceneSvg>
    )
}

/* ---------- status and info ---------- */

const StatusBar = styled.div`
    display: flex;
    align-items: center;
    height: 23px;
    padding-left: 1px;
    white-space: pre;
`
const CancelButton = styled.button`
    display: flex;
    margin: 0 12px 0 4px;
`
const StatusHint = styled.span`
    padding-left: 13px;
    border-left: 1px solid #999;
    line-height: 17px;
`
const Dock = styled.div`
    display: flex;
    height: 91px;
    min-width: 0;
`
const InfoTab = styled.div`
    display: flex;
    flex-direction: column;
    align-items: center;
    justify-content: space-between;
    flex: none;
    width: 24px;
    padding: 5px 0 4px;
    background: #dadada;
    border-right: 1px solid #b8b8b8;
    border-bottom: 1px solid #b8b8b8;
`
const VerticalLabel = styled.span`
    writing-mode: vertical-rl;
    transform: rotate(180deg);
`
const InfoFrame = styled.div`
    display: grid;
    flex: none;
    grid-template-columns: 1fr 16px;
    grid-template-rows: 1fr 16px;
    width: 546px;
    margin: 1px 8px 2px 4px;
    padding-left: 2px;
    border: 1px solid #fafafa;
    border-width: 1px 2px 4px 1px;
`
const InfoText = styled.div`
    display: flex;
    flex-direction: column;
    justify-content: flex-end;
    min-height: 0;
    overflow: hidden;
    padding: 0 0 29px 4px;
    background: #fff;
    white-space: pre;
`
const ScrollTrack = styled.div<{ $vertical?: boolean }>`
    display: flex;
    align-items: ${(p) => (p.$vertical ? "flex-end" : "center")};
    justify-content: ${(p) => (p.$vertical ? "center" : "flex-start")};
    padding: ${(p) => (p.$vertical ? "0 0 18px" : "0 0 0 17px")};
    border-bottom: ${(p) => (p.$vertical ? "0" : "1px solid #777")};
`
const ScrollThumb = styled.span<{ $vertical?: boolean }>`
    flex: none;
    width: ${(p) => (p.$vertical ? "2px" : "346px")};
    height: ${(p) => (p.$vertical ? "9px" : "2px")};
    background: #858585;
`
const ExpandButton = styled.button`
    display: flex;
    align-items: center;
    justify-content: center;
    border-bottom: 1px solid #777;
`
const ToolRows = styled.div`
    display: grid;
    flex: 1;
    grid-template-rows: 42px 46px;
    row-gap: 3px;
    min-width: 0;
    overflow: hidden;
`
const ToolRow = styled.div`
    display: flex;
    align-items: center;
`

/* ---------- side panel ---------- */

const SidePanel = styled.aside`
    display: flex;
    flex: none;
    flex-direction: column;
    width: 64px;
    overflow: hidden;
`
const PanelTitle = styled.h2`
    flex: none;
    width: 96px;
    margin: 0;
    padding: 0 1px;
    border: 1px solid #b8b8b8;
    background: #dadada;
    font-size: 12px;
    font-weight: 400;
    line-height: 24px;
    white-space: nowrap;
`
const PanelBody = styled.div`
    flex: 1;
    width: 96px;
    min-height: 0;
    margin: 2px 0 3px;
    padding: 5px 7px 0;
    overflow: hidden;
    border: 1px solid #fafafa;
    border-width: 1px 0 2px 2px;
`
const Section = styled.section<{ $compact?: boolean }>`
    display: flex;
    flex-direction: column;
    gap: 2px;
    width: 73px;
    margin-bottom: ${(p) => (p.$compact ? 5 : 6)}px;
`
const SectionTitle = styled.h3<{ $compact?: boolean }>`
    margin: 0 0 -2px;
    padding-left: 7px;
    font-size: 13px;
    font-weight: 700;
    line-height: ${(p) => (p.$compact ? 24 : 26)}px;
    white-space: nowrap;
`
const PanelButton = styled.button<{ $compact?: boolean, $active?: boolean, $wide?: boolean }>`
    height: ${(p) => (p.$compact ? 21 : 22)}px;
    padding: 0 1px;
    border: 1px solid ${(p) => (p.$active ? "#2a66a8" : "#c8c8c8")};
    border-radius: 3px;
    background: ${(p) => (p.$active ? "#cbe1f7" : "#fdfdfd")};
    text-align: ${(p) => (p.$wide ? "left" : "center")};
    line-height: 19px;
    white-space: nowrap;
`
const OptionsBody = styled.div`
    width: 96px;
    height: 178px;
    flex: none;
    margin: 2px 0;
    padding: 3px 0 3px 2px;
    border-left: 1px solid #fafafa;
    border-bottom: 2px solid #fafafa;
`
const OptionsList = styled.ul`
    display: flex;
    flex-direction: column;
    height: 100%;
    margin: 0;
    padding: 0;
    border: 1px solid #858585;
    background: #fff;
    list-style: none;
`
const Option = styled.li<{ $alt?: boolean }>`
    padding-left: 12px;
    border-bottom: 1px solid #999;
    background: ${(p) => (p.$alt ? "#ebebeb" : "#fff")};
    line-height: 17px;
    white-space: nowrap;
`
const OptionsScroll = styled.li`
    display: flex;
    align-items: center;
    height: 17px;
    margin-top: auto;
    padding-left: 17px;
    overflow: hidden;
    background: #f0f0f0;
`

interface PanelSection {
    title: string
    compact?: boolean
    wide?: boolean
    buttons: string[]
}

const sections: PanelSection[] = [
    { title: "Boxes▸", buttons: ["New", "O-Grid", "Topo", "Convert"] },
    { title: "Controls", buttons: ["Insert"] },
    { title: "Associate", buttons: ["Points", "Reset"] },
    { title: "Modification", compact: true, buttons: ["Move", "Slide"] },
    { title: "Edges▸", compact: true, buttons: ["Length", "Spacing"] },
    { title: "Shell", compact: true, buttons: ["Map", "Smooth"] },
    { title: "Volume", buttons: ["Mesh", "Smooth"] },
    { title: "Checks", compact: true, wide: true, buttons: ["Box Quality", "Box Duplic."] },
    { title: "Templates", buttons: [] },
]

/* ---------- desktop task bar ---------- */

const TaskBar = styled.footer`
    display: flex;
    align-items: center;
    justify-content: space-between;
    flex: none;
    height: 48px;
    padding-left: 14px;
    overflow: hidden;
    border-top: 1px solid #a9b1c2;
    background: linear-gradient(90deg, #e6ecf8 0, #e3edfa 24%, #e2e9d8 27%, #dfe3ae 30%, #dde0a8 42%, #e4dfbc 50%, #e2e6b0 56%, #e4ee8c 60%, #eaebcf 65%, #ece8ee 68%, #e3edf8 73%, #e2eefa 84%, #e9edfa 100%);
`
const TaskGroup = styled.div`
    display: flex;
    align-items: center;
    gap: 6px;
`
const TaskButton = styled.button<{ $active?: boolean }>`
    display: flex;
    flex-direction: column;
    align-items: center;
    width: 38px;
    height: 38px;
    padding-top: 7px;
    border-radius: 4px;
    background: ${(p) => (p.$active ? "#f8fbff" : "transparent")};
`
const RunMark = styled.span<{ $active?: boolean }>`
    width: ${(p) => (p.$active ? 16 : 6)}px;
    height: 3px;
    margin-top: 4px;
    border-radius: 2px;
    background: ${(p) => (p.$active ? "#1a6fc4" : "#8c9097")};
`
const Tray = styled.div`
    display: flex;
    align-items: center;
    gap: 8px;
    flex: none;
`
const Language = styled.span`
    padding: 0 10px 0 3px;
    font-family: "Noto Sans CJK SC", sans-serif;
    font-size: 15px;
`

const Logo = function ({ size }: { size: number }) {
    return (
        <IconSvg width={size} height={size} viewBox="0 0 24 24" fill="none" aria-hidden="true">
            <rect width="24" height="24" fill="#0b55a4" />
            <path d="M5 14V3h8c6 0 7 6 4 8 5 2 4 10-3 10h-3M5 3v13h3l5-9v14M9 14h4" stroke="#fff" strokeWidth="1.600" />
        </IconSvg>
    )
}

const edgeShape = (
    <>
        <circle cx="12" cy="12" r="12" fill="#1b74c8" />
        <path d="M1 9C4-3 24-3 24 11c0 5-6 7-10 5 3-4-1-8-6-8-3 0-6 1-7 3z" fill="#3cc7a4" />
        <path d="M8 9c-4 6 1 14 9 13-7 5-17-1-17-9 0-3 4-5 8-4z" fill="#1556a8" />
        <path d="M12 9c-3 2-3 8 2 10 4 1 7 0 8-2-2 1-9 1-8-3 2-2 1-4-2-5z" fill="#e6effa" />
    </>
)

const taskIcons: { name: string, running?: boolean, art: ReactNode }[] = [
    {
        name: "Start",
        art: <path d="M0 0h11v11H0zM13 0h11v11H13zM0 13h11v11H0zM13 13h11v11H13z" fill="#1586dc" />,
    },
    {
        name: "File Explorer", running: true,
        art: (
            <>
                <path d="M0 2h8l3 3h-11z" fill="#e09a20" />
                <path d="M0 5h24v17H0z" fill="#fcc63c" />
                <path d="M5 22v-5l2-2h10l2 2v5z" fill="#1b6dc0" />
            </>
        ),
    },
    {
        name: "Edge Dev", running: true,
        art: (
            <>
                {edgeShape}
                <rect x="6" y="16" width="18" height="9" rx="2" fill="#98d81c" />
                <text x="8" y="24" fontFamily="Liberation Sans" fontWeight="700" fontSize="7" fill="#13300a">DEV</text>
            </>
        ),
    },
    { name: "Edge", art: edgeShape },
    {
        name: "Whale", running: true,
        art: (
            <>
                <path d="M1 3c3-2 5 0 5 3l4-2c0 4-3 6-5 7 2 4 6 1 9-2 4-2 9 0 9 5 0 6-5 9-10 8C5 21 3 16 4 9 2 8 1 6 1 3z" fill="#2aae70" />
                <circle cx="17" cy="11" r="3" fill="#fff" stroke="#333" />
                <circle cx="17" cy="11" r="1" fill="#111" />
            </>
        ),
    },
    {
        name: "Command Prompt", running: true,
        art: (
            <>
                <rect x="1" y="2" width="22" height="20" fill="#0a0a0a" stroke="#9a9a9a" />
                <path d="M1 3h22" stroke="#c8c8c8" strokeWidth="2" />
                <text x="3" y="12" fontFamily="Liberation Mono" fontSize="6" fill="#fff">C:\_</text>
            </>
        ),
    },
]

const App = function () {
    return (
        <Window>
            <GlobalStyle />
            <TitleBar>
                <Logo size={16} />
                <span>ANSA v23.1.0 - CFD (C:/Work/CFD/hexablock_pipe/tutorial_files/hexablock.ansa)</span>
            </TitleBar>
            <MenuRow>
                <Menu>
                    {["File", "Tools", "Utilities", "Lists", "Assembly", "Analysis Tools", "Plugins", "Windows", "Help"].map((item) => (
                        <MenuItem key={item}>{item}</MenuItem>
                    ))}
                </Menu>
                <SearchBox>
                    <IconSvg width="10" height="12" viewBox="0 0 10 12" fill="none">
                        <circle cx="5.500" cy="5" r="3.700" stroke="#555" /><path d="M3 8l-3 3" stroke="#555" />
                    </IconSvg>
                    <SearchInput aria-label="Search" placeholder="Search Functions and Filters" />
                </SearchBox>
            </MenuRow>
            <ToolBar>
                {topGroups.map((group, i) => <ToolGroup key={i} {...group} />)}
            </ToolBar>
            <Body>
                <Main>
                    <Viewport>
                        <Scene />
                        <ViewportLabel>{"0:hexablock.ansa,  Current Part: pipe_junction"}</ViewportLabel>
                    </Viewport>
                    <StatusBar>
                        <span>Points&gt;Project to Points</span>
                        <CancelButton aria-label="Cancel">
                            <IconSvg width="14" height="14" viewBox="0 0 14 14" fill="none">
                                <circle cx="7" cy="7" r="6.300" fill="#fbd8cc" stroke="#d8452c" />
                                <path d="M4.500 4.500l5 5M9.500 4.500l-5 5" stroke="#d8452c" />
                            </IconSvg>
                        </CancelButton>
                        <StatusHint>Select up to 4 point(s) and confirm with middle click.</StatusHint>
                    </StatusBar>
                    <Dock>
                        <InfoTab>
                            <button aria-label="Close info">
                                <IconSvg width="8" height="8" viewBox="0 0 8 8"><path d="M0 0l8 8M8 0L0 8" stroke="#444" /></IconSvg>
                            </button>
                            <VerticalLabel>Info</VerticalLabel>
                        </InfoTab>
                        <InfoFrame>
                            <InfoText>
                                <span>HOST : midas</span>
                                <span>USER : vangelis</span>
                                <span>{"DATE :21-AUG-2015  16:03:05"}</span>
                            </InfoText>
                            <ScrollTrack $vertical><ScrollThumb $vertical /></ScrollTrack>
                            <ScrollTrack><ScrollThumb /></ScrollTrack>
                            <ExpandButton aria-label="Expand">
                                <IconSvg width="10" height="10" viewBox="0 0 10 10" fill="none">
                                    <path d="M1 3V1h2M7 1h2v2M9 7v2H7M3 9H1V7" stroke="#222" strokeWidth="1.400" />
                                </IconSvg>
                            </ExpandButton>
                        </InfoFrame>
                        <ToolRows>
                            <ToolRow>{selectionGroups.map((group, i) => <ToolGroup key={i} tall {...group} />)}</ToolRow>
                            <ToolRow>{visibilityGroups.map((group, i) => <ToolGroup key={i} tall {...group} />)}</ToolRow>
                        </ToolRows>
                    </Dock>
                </Main>
                <SidePanel>
                    <PanelTitle>HEXA BLOCK</PanelTitle>
                    <PanelBody>
                        {sections.map(({ title, compact, wide, buttons }) => (
                            <Section key={title} $compact={compact}>
                                <SectionTitle $compact={compact}>{title}</SectionTitle>
                                {buttons.map((label) => (
                                    <PanelButton key={label} $compact={compact} $wide={wide} $active={label === "Points"}>
                                        {label}
                                    </PanelButton>
                                ))}
                            </Section>
                        ))}
                    </PanelBody>
                    <PanelTitle>Options List</PanelTitle>
                    <OptionsBody>
                        <OptionsList>
                            <Option>Translate</Option>
                            <Option $alt>Mesh</Option>
                            <OptionsScroll><ScrollThumb /></OptionsScroll>
                        </OptionsList>
                    </OptionsBody>
                </SidePanel>
            </Body>
            <TaskBar>
                <TaskGroup>
                    {taskIcons.map(({ name, running, art }) => (
                        <TaskButton key={name} aria-label={name}>
                            <IconSvg width="24" height="24" viewBox="0 0 24 24">{art}</IconSvg>
                            {running && <RunMark />}
                        </TaskButton>
                    ))}
                    <TaskButton $active aria-label="ANSA">
                        <Logo size={24} />
                        <RunMark $active />
                    </TaskButton>
                </TaskGroup>
                <Tray>
                    <IconSvg width="12" height="8" viewBox="0 0 12 8" fill="none"><path d="M1 7l5-5 5 5" stroke="#222" strokeWidth="1.400" /></IconSvg>
                    <IconSvg width="16" height="12" viewBox="0 0 16 12">
                        <path d="M4 12a4 4 0 0 1 0-7 5 5 0 0 1 9 0 4 4 0 0 1 0 7z" fill="#1d7fe4" /><path d="M8 4a5 5 0 0 1 5 1l-5 3z" fill="#0a55b8" />
                    </IconSvg>
                    <IconSvg width="16" height="18" viewBox="0 0 16 18">
                        <ellipse cx="8" cy="9" rx="6" ry="8" fill="#111" />
                        <path d="M2 8L0 13l3-1zM14 8l2 5-3-1z" fill="#111" />
                        <ellipse cx="8" cy="13" rx="4" ry="4" fill="#fff" />
                        <path d="M2 8c4 3 8 3 12 0v2c-4 3-8 3-12 0z" fill="#e0241c" />
                        <circle cx="6" cy="4" r="1.500" fill="#fff" /><circle cx="10" cy="4" r="1.500" fill="#fff" />
                        <path d="M5 6h6l-3 2zM3 16h4v2H3zM9 16h4v2H9z" fill="#f6a81c" />
                    </IconSvg>
                    <IconSvg width="16" height="14" viewBox="0 0 16 14">
                        <ellipse cx="6" cy="5" rx="6" ry="5" fill="#22b068" /><path d="M2 8v4l3-3z" fill="#22b068" />
                        <ellipse cx="11" cy="9" rx="5" ry="4" fill="#eef2ee" />
                        <g fill="#444"><circle cx="9" cy="8" r="0.800" /><circle cx="13" cy="8" r="0.800" /></g>
                    </IconSvg>
                    <IconSvg width="22" height="24" viewBox="1 0 22 24" fill="none">
                        <circle cx="12" cy="12" r="10" stroke="#858d98" strokeWidth="3" />
                        <path d="M12 2a10 10 0 0 1 5 1" stroke="#48b8b0" strokeWidth="3" />
                        <text x="5" y="17" fontFamily="Liberation Sans" fontSize="13" fill="#fff">11</text>
                    </IconSvg>
                    <IconSvg width="24" height="18" viewBox="-6 0 24 18" fill="none">
                        <rect x="3" y="1" width="6" height="11" rx="3" fill="#dce8f8" stroke="#1c56a8" strokeWidth="1.300" />
                        <path d="M1 8c0 8 10 8 10 0M6 14v4" stroke="#1c56a8" strokeWidth="1.300" />
                    </IconSvg>
                    <Language>中</Language>
                    <IconSvg width="3" height="24" viewBox="0 0 3 24" fill="none">
                        <path d="M8 1H2c-2 0-1 2-1 4v12c0 3 1 4 3 4" stroke="#444" strokeWidth="1.500" />
                    </IconSvg>
                </Tray>
            </TaskBar>
        </Window>
    )
}

export default App
